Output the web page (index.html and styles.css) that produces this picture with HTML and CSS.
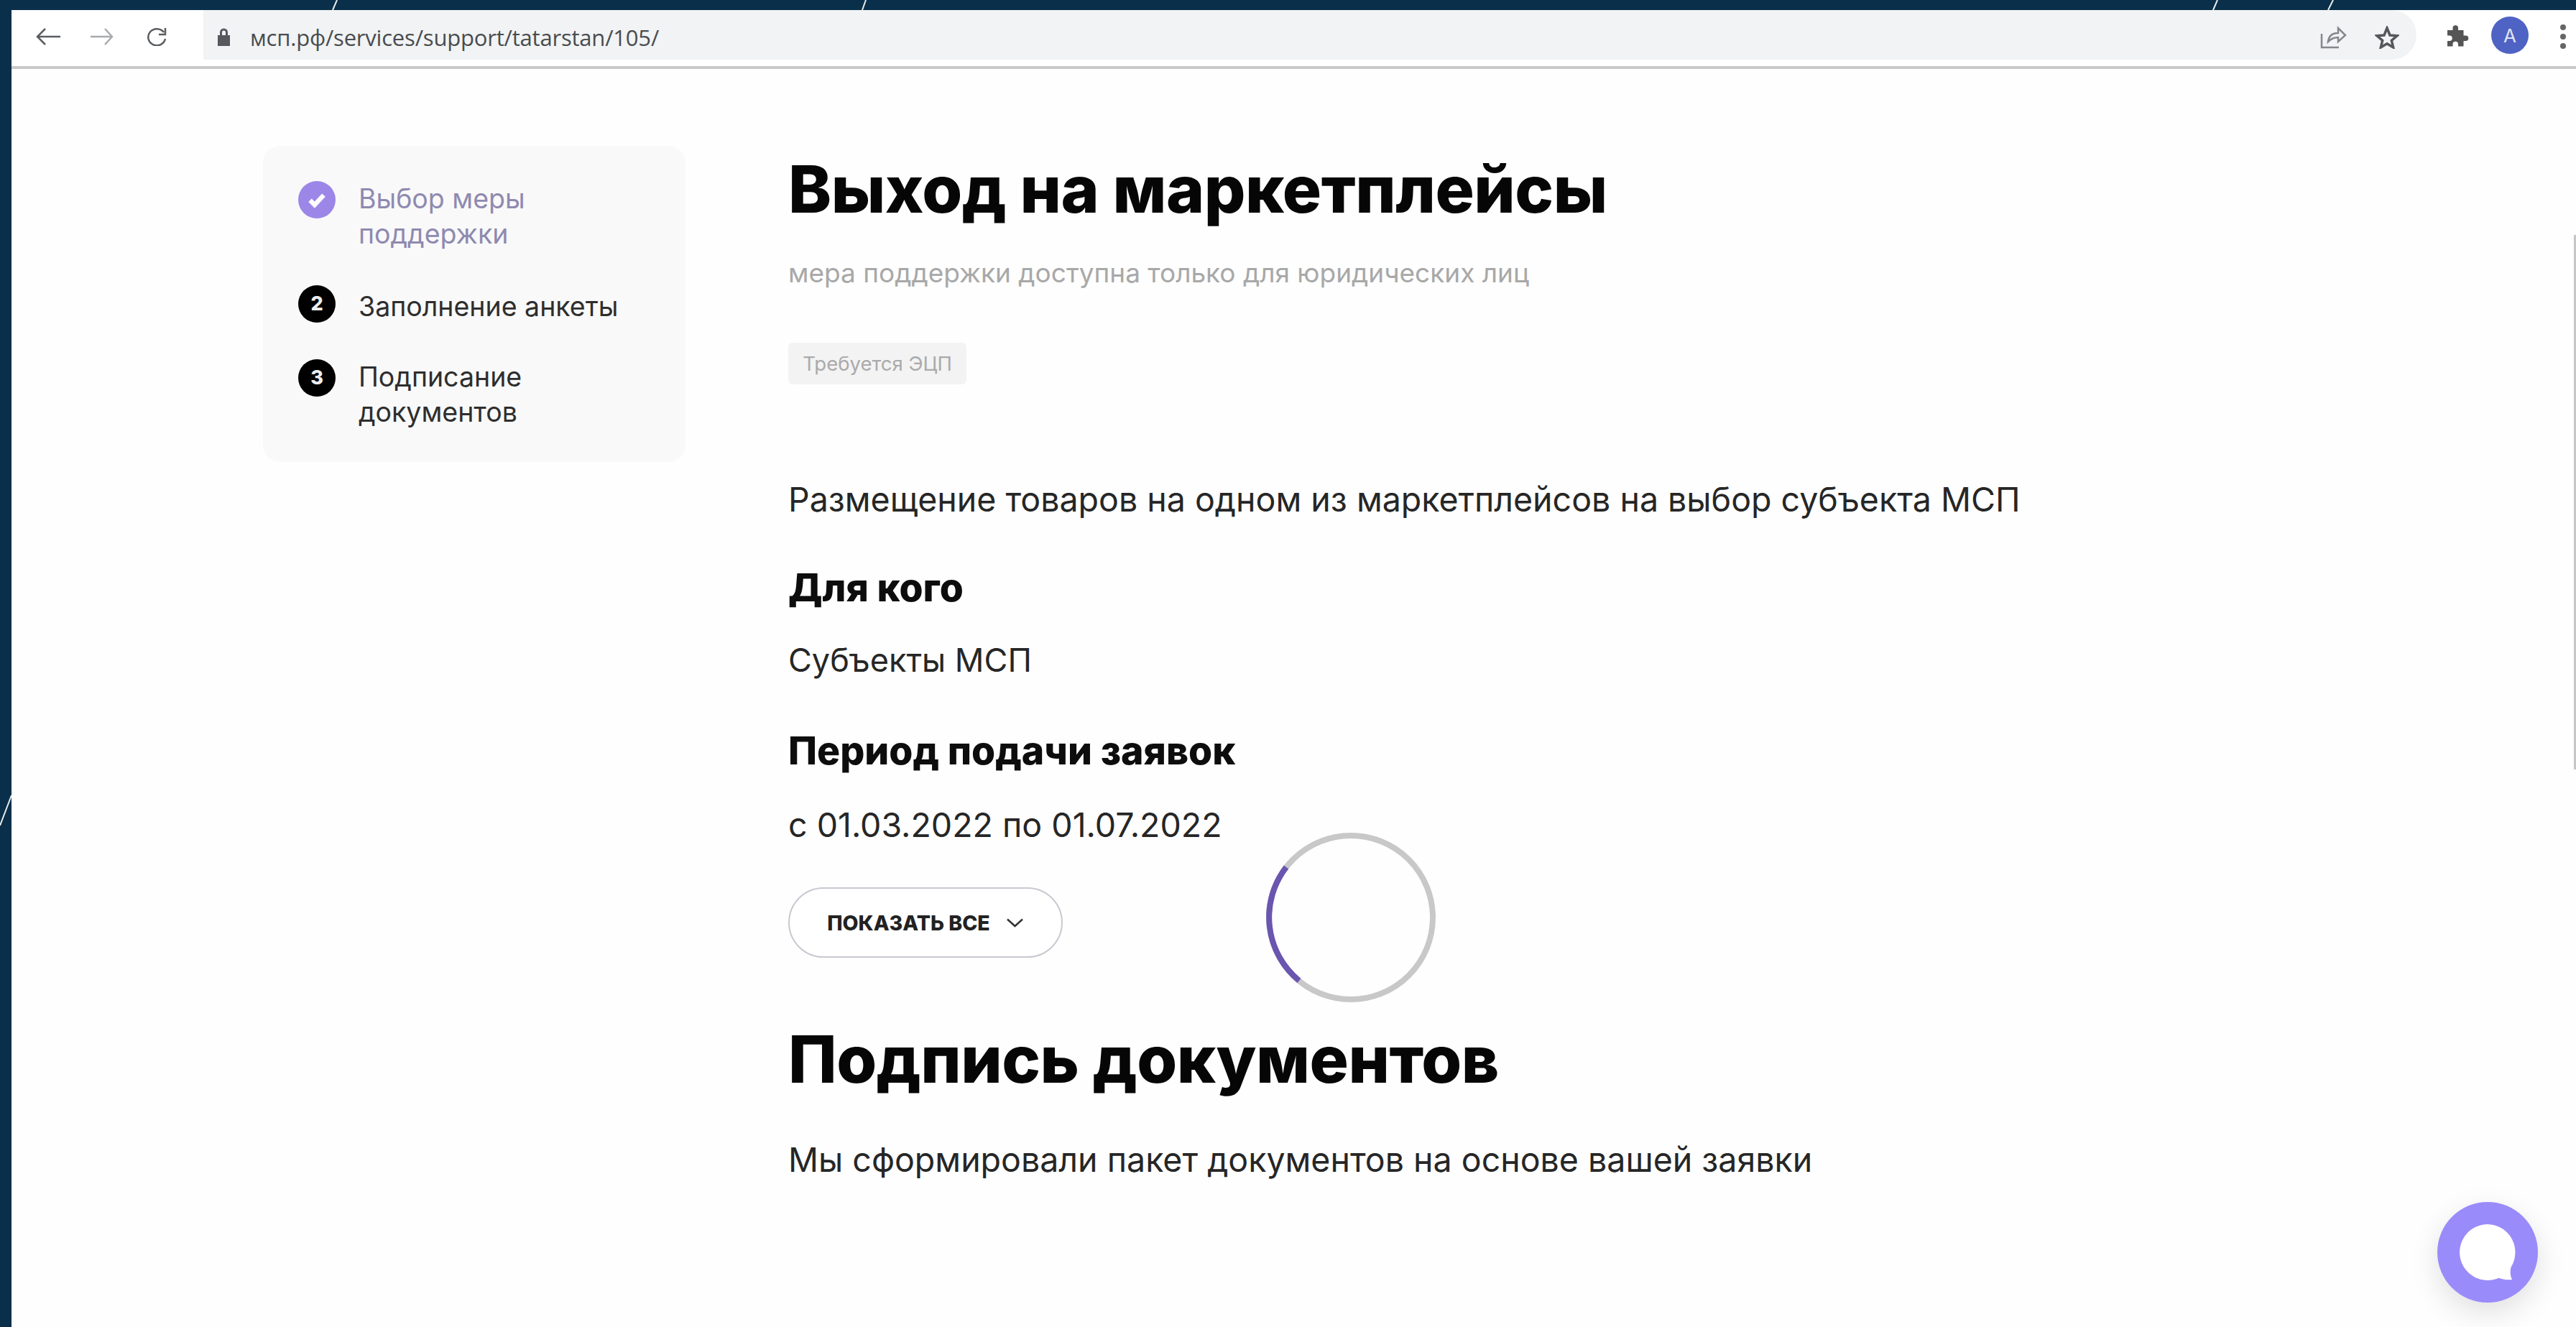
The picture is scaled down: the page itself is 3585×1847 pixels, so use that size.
FILE: index.html
```html
<!DOCTYPE html>
<html lang="ru">
<head>
<meta charset="utf-8">
<title>Выход на маркетплейсы</title>
<link rel="stylesheet" href="styles.css">
</head>
<body>
<svg class="slide-lines" width="3585" height="1847" viewBox="0 0 3585 1847">
  <path d="M469 0 L463 14 M1205 0 L1200 14 M3086 0 L3080 14 M3247 0 L3240 14 M16 1107 L0 1149"/>
</svg>
<main class="window">
  <header class="toolbar">
    <div class="nav">
      <svg class="nav-back" viewBox="0 0 34 24"><path class="stroke-dark" d="M34 12H2M13 1L2 12l11 11"/></svg>
      <svg class="nav-forward" viewBox="0 0 32 24"><path class="stroke-light" d="M0 12h30M20 1l10 11-10 11"/></svg>
      <svg class="nav-reload" viewBox="0 0 30 26"><path class="stroke-dark" d="M25 7A12 11.500 0 1 0 27 16M27 1v9H18"/></svg>
    </div>
    <div class="omnibox">
      <div class="address">
        <svg class="lock" viewBox="0 0 19 25"><path d="M4 10V6a5.500 5.500 0 0 1 11 0v4h3v15H1V10zM7 10h5V6a2.500 2.500 0 0 0-5 0z"/></svg>
        <span class="url">мсп.рф/services/support/tatarstan/105/</span>
      </div>
      <div class="omni-actions">
        <svg class="omni-share" viewBox="0 0 37 33"><path class="stroke-mid" d="M2 12v19h24M11 23c1-8 6-12 14-12V4l10 10-10 9v-6c-6 0-10 2-14 6z"/></svg>
        <svg class="omni-star" viewBox="0 0 34 32"><path class="stroke-star" d="M17 3l4 10 10 .8-7.700 6.500 2.400 9.700L17 24.800 8.300 30l2.400-9.700L3 13.800 13 13z"/></svg>
      </div>
    </div>
    <div class="extensions">
      <svg class="puzzle" viewBox="0 0 24 24"><path d="M9 4a2.500 2.500 0 0 1 5 0v2h5v5h2a2.500 2.500 0 0 1 0 5h-2v5h-5v-2a2.500 2.500 0 0 0-5 0v2H4v-5h2a2.500 2.500 0 0 0 0-5H4V6h5z"/></svg>
      <span class="avatar">A</span>
      <span class="menu-dots"><i></i><i></i><i></i></span>
    </div>
  </header>

  <div class="page">
    <aside class="steps">
      <div class="step step-done">
        <span class="step-mark mark-done">
          <svg viewBox="0 0 24 24"><path d="M6 12.500l4 4 8-8.500"/></svg>
        </span>
        <span class="step-label">Выбор меры<br>поддержки</span>
      </div>
      <div class="step step-fill">
        <span class="step-mark">2</span>
        <span class="step-label">Заполнение анкеты</span>
      </div>
      <div class="step">
        <span class="step-mark">3</span>
        <span class="step-label">Подписание<br>документов</span>
      </div>
    </aside>

    <section class="content">
      <h1 class="title">Выход на маркетплейсы</h1>
      <p class="note">мера поддержки доступна только для юридических лиц</p>
      <span class="tag">Требуется ЭЦП</span>
      <p class="text lead">Размещение товаров на одном из маркетплейсов на выбор субъекта МСП</p>
      <h2 class="subtitle">Для кого</h2>
      <p class="text audience">Субъекты МСП</p>
      <h2 class="subtitle period">Период подачи заявок</h2>
      <p class="text dates">с 01.03.2022 по 01.07.2022</p>
      <button class="show-all" type="button">
        ПОКАЗАТЬ ВСЕ
        <svg viewBox="0 0 25 13"><path d="M2 1.500l10.500 9.500L23 1.500"/></svg>
      </button>
      <h1 class="title docs">Подпись документов</h1>
      <p class="text docs-text">Мы сформировали пакет документов на основе вашей заявки</p>
    </section>
  </div>

  <!-- Loading ring over the content -->
  <svg class="spinner" viewBox="0 0 240 240">
    <circle class="ring" cx="120" cy="120" r="114"/>
    <path class="ring-active" d="M30 50 A114 114 0 0 0 48 208"/>
  </svg>

  <span class="scroll-edge"></span>

  <button class="chat" type="button" aria-label="Чат">
    <svg viewBox="0 0 80 80"><path d="M40 0a40 40 0 1 0 16 76.700c5 2 12 3.300 19 2.300-3-5-3-13-1.500-18A40 40 0 0 0 40 0z"/></svg>
  </button>
</main>
</body>
</html>
```
FILE: styles.css
```css
* { box-sizing: border-box; }

html, body {
  margin: 0;
  height: 100%;
}

body {
  background: #0a2f4a;
  font-family: Inter, "Liberation Sans", sans-serif;
  color: #1c1c1c;
  overflow: hidden;
  padding: 14px 0 0 16px;
  position: relative;
}

.slide-lines {
  position: absolute;
  left: 0;
  top: 0;
}

.slide-lines path {
  stroke: #e8ecea;
  stroke-width: 2;
  fill: none;
}

.window {
  position: relative;
  width: 3569px;
  height: 1833px;
  background: #fefefe;
  overflow: hidden;
}

/* Browser chrome */
.toolbar {
  height: 82px;
  display: flex;
  align-items: center;
  background: #fff;
  border-bottom: 4px solid #c9c9c9;
  padding: 0 0 4px 34px;
}

.nav {
  display: flex;
  align-items: center;
  width: 233px;
  flex: none;
}

.nav-back { width: 34px; height: 24px; }
.nav-forward { width: 32px; height: 24px; margin-left: 42px; }
.nav-reload { width: 30px; height: 26px; margin-left: 45px; }

.stroke-dark, .stroke-light, .stroke-mid, .stroke-star {
  fill: none;
  stroke-width: 2.500;
}
.stroke-dark { stroke: #5a5d61; }
.stroke-light { stroke: #a8abae; }
.stroke-mid { stroke: #85878a; }
.stroke-star { stroke: #55575a; stroke-width: 3.500; }

.omnibox {
  align-self: flex-start;
  width: 3080px;
  height: 69px;
  flex: none;
  background: #f1f3f4;
  border-radius: 0 35px 35px 0;
  display: flex;
  align-items: center;
  justify-content: space-between;
  padding: 6px 24px 0 19px;
}

.address {
  display: flex;
  align-items: center;
  gap: 27px;
}

.lock {
  width: 19px;
  height: 25px;
  fill: #55585c;
  fill-rule: evenodd;
}

.url {
  font-family: "Open Sans", "Liberation Sans", sans-serif;
  font-size: 31px;
  letter-spacing: -0.200px;
  color: #4a4c50;
}

.omni-actions {
  display: flex;
  align-items: center;
  gap: 39px;
}

.omni-share { width: 37px; height: 33px; }
.omni-star { width: 34px; height: 32px; }

.extensions {
  display: flex;
  align-items: center;
  margin-left: 37px;
}

.puzzle {
  width: 36px;
  height: 36px;
  fill: #555;
}

.avatar {
  width: 52px;
  height: 52px;
  border-radius: 50%;
  background: #4f63c4;
  color: #dfe3f5;
  font-size: 26px;
  display: flex;
  align-items: center;
  justify-content: center;
  margin: 0 0 4px 31px;
}

.menu-dots {
  display: flex;
  flex-direction: column;
  gap: 5px;
  margin-left: 44px;
}

.menu-dots i {
  width: 8px;
  height: 8px;
  border-radius: 50%;
  background: #666;
}

/* Page body */
.page {
  display: flex;
  align-items: flex-start;
  padding: 107px 0 0 350px;
}

.steps {
  width: 588px;
  height: 440px;
  flex: none;
  background: #f9f9f9;
  border-radius: 24px;
  padding: 49px 49px;
  font-size: 37.500px;
  line-height: 49px;
}

.step {
  display: flex;
  gap: 32px;
  margin-bottom: 49px;
  color: #2e2e2e;
}

.step-done { color: #8f8ab0; margin-bottom: 47px; }

.step-fill .step-label { padding-top: 5px; }

.step-mark {
  width: 52px;
  height: 52px;
  flex: none;
  border-radius: 50%;
  background: #000;
  color: #eee;
  font-size: 27px;
  font-weight: 800;
  line-height: 52px;
  text-align: center;
}

.mark-done {
  background: #9c87e8;
  display: flex;
  align-items: center;
  justify-content: center;
}

.mark-done svg {
  width: 38px;
  height: 38px;
  fill: none;
  stroke: #fff;
  stroke-width: 4;
}

.content {
  margin-left: 143px;
  display: flex;
  flex-direction: column;
  align-items: flex-start;
}

.title {
  font-size: 90.500px;
  font-weight: 800;
  line-height: 100px;
  letter-spacing: -0.500px;
  margin: 10px 0 0;
  color: #060606;
}

.note {
  font-size: 37px;
  line-height: 48px;
  color: #a8a8a8;
  margin: 43px 0 0;
}

.tag {
  margin-top: 73px;
  background: #f3f3f3;
  border-radius: 6px;
  color: #aaa;
  font-size: 27.500px;
  line-height: 58px;
  width: 248px;
  text-align: center;
  white-space: nowrap;
}

.text {
  font-size: 46.500px;
  line-height: 56px;
  margin: 0;
  color: #262626;
}

.lead { margin-top: 132px; }

.subtitle {
  font-size: 53.500px;
  font-weight: 800;
  line-height: 60px;
  margin: 65px 0 0;
  color: #0d0d0d;
}

.audience { margin-top: 43px; font-size: 45px; }

.period { margin-top: 68px; }

.dates { margin-top: 45px; }

.show-all {
  margin-top: 59px;
  width: 382px;
  height: 98px;
  border: 2px solid #c8c8d0;
  border-radius: 49px;
  background: #fff;
  display: flex;
  align-items: center;
  justify-content: center;
  gap: 22px;
  font-family: inherit;
  font-size: 28.500px;
  font-weight: 800;
  color: #222;
}

.show-all svg {
  width: 25px;
  height: 13px;
  fill: none;
  stroke: #333;
  stroke-width: 2.500;
}

.docs { margin-top: 91px; }

.docs-text { margin-top: 62px; }

.spinner {
  position: absolute;
  left: 1744px;
  top: 1143px;
  width: 240px;
  height: 240px;
  fill: none;
  stroke-width: 8;
}

.ring { stroke: #c8c8c8; }
.ring-active { stroke: #6a55b0; }

.scroll-edge {
  position: absolute;
  right: 0;
  top: 313px;
  width: 3px;
  height: 744px;
  background: #c6c6c6;
}

.chat {
  position: absolute;
  left: 3376px;
  top: 1659px;
  width: 140px;
  height: 140px;
  border: 0;
  border-radius: 50%;
  background: #9a8bfb;
  box-shadow: 0 14px 40px rgba(0, 0, 0, 0.12);
  display: flex;
  align-items: center;
  justify-content: center;
  padding: 0;
}

.chat svg {
  width: 78px;
  height: 78px;
  fill: #fff;
}
```
